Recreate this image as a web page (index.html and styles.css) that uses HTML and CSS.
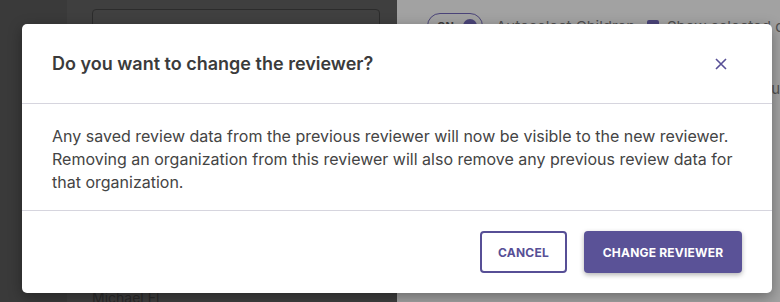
FILE: index.html
```html
<!DOCTYPE html>
<html lang="en">
<head>
<meta charset="utf-8">
<title>Change reviewer</title>
<link rel="stylesheet" href="styles.css">
</head>
<body>
<div class="page">
  <div class="left">
    <div class="left-strip"></div>
    <div class="left-main">
      <div class="left-box"></div>
      <div class="left-name">Michael Fl</div>
    </div>
  </div>
  <div class="right">
    <div class="toolbar">
      <span class="toggle"><span class="toggle-text">ON</span><span class="toggle-dot"></span></span>
      <span class="tool-label">Autoselect Children</span>
      <span class="check"></span>
      <span class="tool-label">Show selected on</span>
    </div>
    <div class="right-line">u</div>
  </div>
</div>

<div class="backdrop">
  <div class="modal" role="dialog" aria-labelledby="modal-title">
    <div class="modal-header">
      <h2 class="modal-title" id="modal-title">Do you want to change the reviewer?</h2>
      <button class="close" aria-label="Close">
        <svg width="12" height="12" viewBox="0 0 12 12"><path d="M1 1 L11 11 M11 1 L1 11" stroke="#574f96" stroke-width="1.6" fill="none"/></svg>
      </button>
    </div>
    <div class="modal-body">
      <p>Any saved review data from the previous reviewer will now be visible to the new reviewer. Removing an organization from this reviewer will also remove any previous review data for that organization.</p>
    </div>
    <div class="modal-footer">
      <button class="btn btn-outline">Cancel</button>
      <button class="btn btn-primary">Change Reviewer</button>
    </div>
  </div>
</div>
</body>
</html>
```

FILE: styles.css
```css
* { box-sizing: border-box; }
html, body { margin: 0; padding: 0; }
body {
  width: 780px;
  height: 302px;
  overflow: hidden;
  font-family: Inter, "Liberation Sans", sans-serif;
  position: relative;
}
.page {
  display: grid;
  grid-template-columns: 397px 1fr;
  height: 302px;
}
.left {
  background: #3f3f3f;
  display: flex;
}
.left-strip {
  width: 67px;
  background: #3a3a3a;
}
.left-main {
  flex: 1;
  padding: 9px 0 0 25px;
  display: flex;
  flex-direction: column;
}
.left-box {
  height: 120px;
  margin-right: 17px;
  border: 1px solid #2c2c2c;
  border-radius: 4px;
  background: #404040;
}
.left-name {
  margin-top: 160px;
  font-size: 14px;
  color: #2a2a2a;
  white-space: nowrap;
}
.right {
  background: #a2a2a2;
  padding: 13px 0 0 30px;
  overflow: hidden;
}
.toolbar {
  display: flex;
  align-items: center;
  white-space: nowrap;
}
.toggle {
  flex: none;
  width: 56px;
  height: 26px;
  border: 1px solid #4b4479;
  border-radius: 13px;
  display: flex;
  align-items: center;
  justify-content: space-between;
  padding: 0 5px 0 9px;
  margin-right: 13px;
}
.toggle-text { font-size: 11px; font-weight: 700; color: #3d3d3d; }
.toggle-dot { width: 14px; height: 14px; border-radius: 50%; background: #4b4479; }
.tool-label { font-size: 15px; color: #505050; flex: none; }
.check {
  flex: none;
  width: 12px;
  height: 12px;
  border-radius: 2px;
  background: #4b4479;
  margin: 0 8px 0 12px;
}
.right-line {
  margin-top: 40px;
  text-align: right;
  font-size: 15px;
  color: #505050;
  white-space: nowrap;
  padding-right: 0;
}

.backdrop {
  position: absolute;
  left: 0;
  top: 0;
  width: 780px;
  height: 302px;
}
.modal {
  position: absolute;
  left: 22px;
  top: 24px;
  width: 750px;
  background: #fff;
  border-radius: 5px;
  box-shadow: 0 4px 14px rgba(0, 0, 0, 0.35);
}
.modal-header {
  height: 80px;
  padding: 0 45px 0 30px;
  display: flex;
  align-items: center;
  justify-content: space-between;
  border-bottom: 1px solid #d6d5de;
}
.modal-title {
  margin: 0;
  font-size: 18px;
  font-weight: 600;
  color: #3b3b3b;
}
.close {
  border: 0;
  background: none;
  padding: 0;
  width: 12px;
  height: 12px;
  display: flex;
  cursor: pointer;
}
.modal-body {
  padding: 21px 30px 16px;
}
.modal-body p {
  margin: 0;
  font-size: 16px;
  line-height: 23px;
  color: #444;
}
.modal-footer {
  border-top: 1px solid #d6d5de;
  padding: 20px 30px 20px;
  display: flex;
  justify-content: flex-end;
  gap: 17px;
}
.btn {
  height: 42px;
  border-radius: 4px;
  font-family: Inter, "Liberation Sans", sans-serif;
  font-size: 12px;
  font-weight: 700;
  text-transform: uppercase;
  letter-spacing: 0.2px;
  cursor: pointer;
}
.btn-outline {
  width: 87px;
  background: #fff;
  border: 2px solid #574f96;
  color: #574f96;
}
.btn-primary {
  width: 158px;
  background: #5a5297;
  border: 0;
  color: #fff;
  box-shadow: 0 2px 5px rgba(0, 0, 0, 0.3);
}
```
